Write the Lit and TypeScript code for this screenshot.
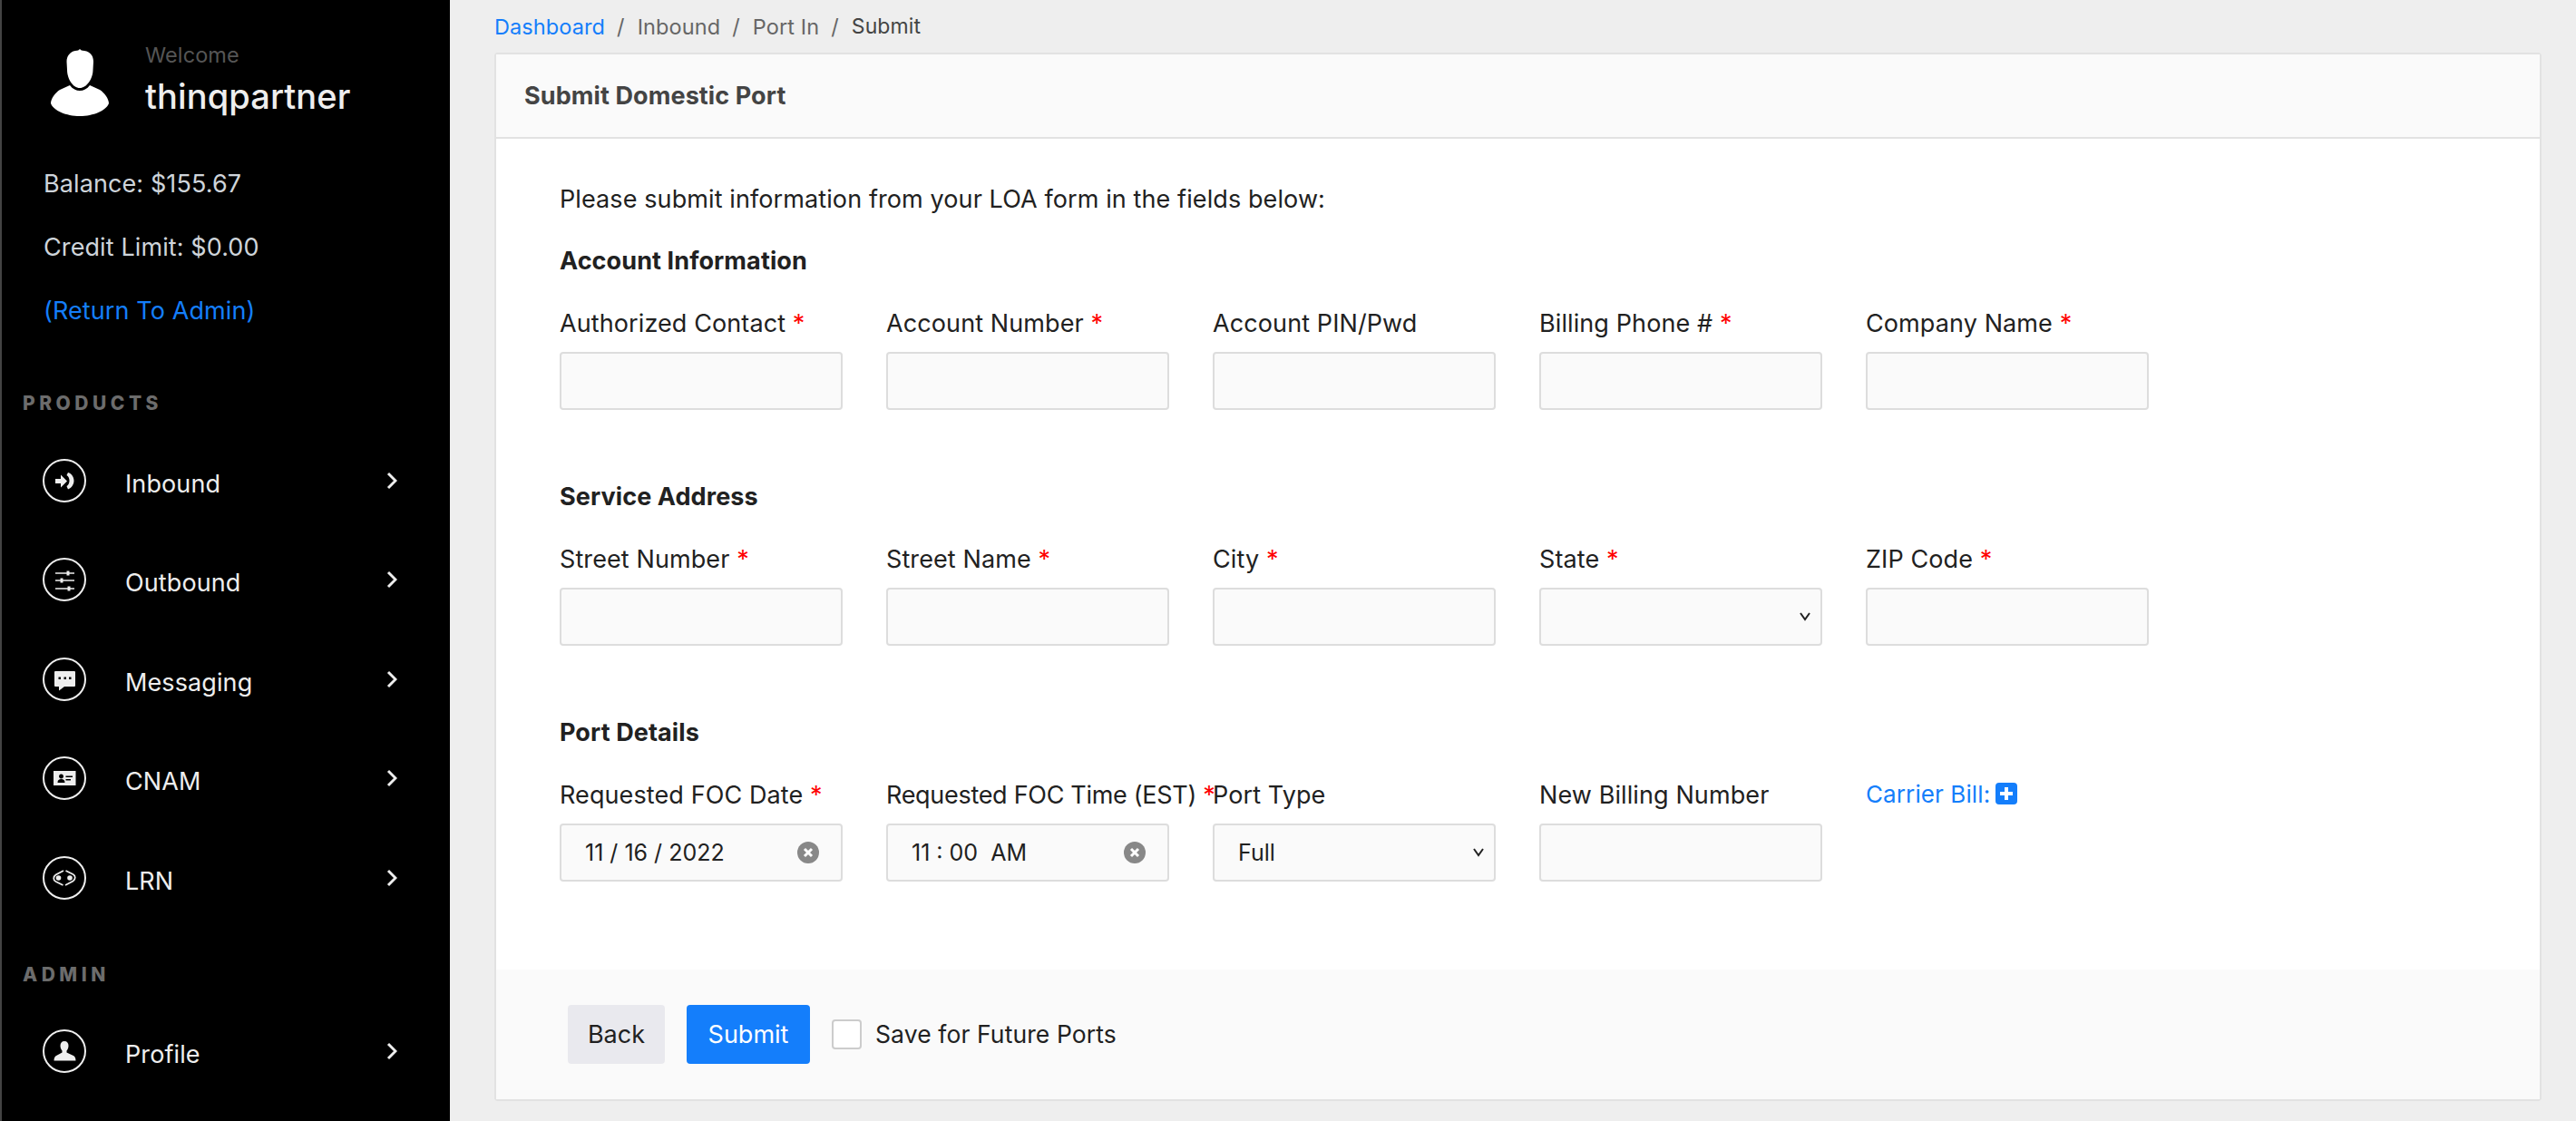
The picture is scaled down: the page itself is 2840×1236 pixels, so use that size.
import {LitElement, html, css, svg} from 'lit';
import {customElement} from 'lit/decorators.js';
import {classMap} from 'lit/directives/class-map.js';

type Field = {
  label: string;
  required?: boolean;
  tight?: boolean;
  kind?: 'input' | 'select' | 'clear' | 'link';
  value?: string;
};

const sections: {title: string; fields: Field[]}[] = [
  {
    title: 'Account Information',
    fields: [
      {label: 'Authorized Contact', required: true},
      {label: 'Account Number', required: true},
      {label: 'Account PIN/Pwd'},
      {label: 'Billing Phone #', required: true},
      {label: 'Company Name', required: true},
    ],
  },
  {
    title: 'Service Address',
    fields: [
      {label: 'Street Number', required: true},
      {label: 'Street Name', required: true},
      {label: 'City', required: true},
      {label: 'State', required: true, kind: 'select'},
      {label: 'ZIP Code', required: true},
    ],
  },
  {
    title: 'Port Details',
    fields: [
      {label: 'Requested FOC Date', required: true, kind: 'clear', value: '11 / 16 / 2022'},
      {label: 'Requested FOC Time (EST)', required: true, tight: true, kind: 'clear', value: '11 : 00\u00a0 AM'},
      {label: 'Port Type', kind: 'select', value: 'Full'},
      {label: 'New Billing Number'},
      {label: 'Carrier Bill:', kind: 'link'},
    ],
  },
];

// nav icons, drawn in the 48x48 box of the ring
const icons = {
  inbound: svg`<path d="M14 22h6v-4.500l7 7-7 7V27h-6z"/><path d="M28 15c4 1 6.500 5 6.500 9s-2.500 8-6.500 9.500l-1.500-3.500c2-1 3-3.500 3-6s-1-5-3-6z"/>`,
  outbound: svg`<path d="M14 16.200h21v1.600H14zM14 24.200h21v1.600H14zM14 33.200h21v1.600H14z"/><path d="M26.500 14.500h3v5h-3zM19.500 22.500h3v5h-3zM27.500 31.500h3v5h-3z"/>`,
  messaging: svg`<path fill-rule="evenodd" d="M14 15h21a1 1 0 0 1 1 1v15a1 1 0 0 1-1 1H24l-6 4.500V32h-4a1 1 0 0 1-1-1V16a1 1 0 0 1 1-1zM17.500 21.500v2.500H20v-2.500zM23.500 21.500v2.500H26v-2.500zM29 21.500v2.500h2.500v-2.500z"/>`,
  cnam: svg`<path fill-rule="evenodd" d="M12 16h24.500v16H12zM20.500 19.500a2.500 2.500 0 1 0 .01 0zM16.500 29c0-3 1.500-4 4-4s4 1 4 4zM25.500 21.500h7.500v1.500h-7.500zM25.500 25h5.500v1.500h-5.500z"/>`,
  lrn: svg`<g fill="none" stroke="#eee" stroke-width="1.800"><path d="M23 16l-8.500 4.500c-3 2-3 6 0 7.500l8 4"/><path d="M25 32l8.500-4.500c3-2 3-6 0-7.500l-8-4"/></g><circle cx="17.500" cy="24" r="2.800"/><circle cx="30" cy="24" r="2.800"/>`,
  profile: svg`<path d="M24 13c3 0 4.500 2 4.500 5 0 2.500-1 4.500-2 5.500v2l7.500 3.500c1.500.7 2.500 2.500 2.500 5.500H12.500c0-3 1-4.800 2.500-5.500l6.500-3.500v-2c-1-1-2-3-2-5.500 0-3 1.500-5 4.500-5z"/>`,
};

const navSections: {title: string; items: {label: string; icon: keyof typeof icons}[]}[] = [
  {
    title: 'PRODUCTS',
    items: [
      {label: 'Inbound', icon: 'inbound'},
      {label: 'Outbound', icon: 'outbound'},
      {label: 'Messaging', icon: 'messaging'},
      {label: 'CNAM', icon: 'cnam'},
      {label: 'LRN', icon: 'lrn'},
    ],
  },
  {title: 'ADMIN', items: [{label: 'Profile', icon: 'profile'}]},
];

@customElement('app-root')
export class AppRoot extends LitElement {
  static override styles = css`
    * {
      box-sizing: border-box;
      margin: 0;
      padding: 0;
    }

    :host {
      display: flex;
      height: 100vh;
      overflow: hidden;
      background: #eeeeee;
      color: #212121;
      font-family: Inter, "Liberation Sans", sans-serif;
      font-size: 27px;
      letter-spacing: 0.1px;
    }

    .sidebar {
      width: 496px;
      flex: none;
      background: #000;
      border-left: 2px solid #444;
      overflow: hidden;
    }

    .user {
      display: flex;
      align-items: flex-start;
      gap: 40px;
      padding: 48px 0 0 54px;
      height: 168px;
    }

    .avatar {
      margin-top: 6px;
      flex: none;
    }

    .welcome {
      color: #555;
      font-size: 23.500px;
      line-height: 26px;
    }

    .username {
      color: #eee;
      font-size: 38px;
      font-weight: 500;
      line-height: 46px;
      margin-top: 9px;
    }

    .stats {
      padding-left: 46px;
      height: 263px;
      color: #ced4da;
    }

    .stats div {
      height: 70px;
      line-height: 70px;
    }

    .stats .admin {
      color: #147efb;
    }

    .nav-title {
      color: #6c6c6c;
      font-size: 21px;
      font-weight: 800;
      letter-spacing: 4.500px;
      line-height: 28px;
      padding-left: 23px;
    }

    .nav-items {
      margin: 16px 0 38px;
    }

    .nav-item {
      height: 109.500px;
      display: flex;
      align-items: center;
      padding-left: 45px;
      color: #eee;
    }

    .ring {
      flex: none;
      fill: #eee;
    }

    .nav-item span {
      flex: 1;
      margin-left: 43px;
      padding-top: 7px;
    }

    .chevron {
      flex: none;
      margin-right: 58px;
    }

    .main {
      flex: 1;
      min-width: 0;
      display: flex;
      flex-direction: column;
      padding: 0 38px 22px 49px;
    }

    .crumbs {
      height: 58px;
      flex: none;
      display: flex;
      align-items: center;
      font-size: 23.500px;
      color: #666;
    }

    .crumbs a {
      color: #147efb;
    }

    .crumbs i {
      font-style: normal;
      margin: 0 14px 0 13px;
    }

    .crumbs .here {
      color: #444;
      font-size: 23px;
    }

    .card {
      flex: 1;
      display: flex;
      flex-direction: column;
      background: #fff;
      border: 2px solid #e2e2e2;
      border-radius: 4px;
    }

    .card-head {
      height: 93px;
      flex: none;
      display: flex;
      align-items: center;
      padding-left: 31px;
      background: #fafafa;
      border-bottom: 2px solid #e2e2e2;
      color: #444;
      font-weight: 700;
    }

    .card-body {
      flex: 1;
      padding: 50px 0 0 70px;
    }

    .intro {
      line-height: 34px;
      margin-bottom: 32px;
    }

    .section {
      margin-bottom: 77px;
    }

    .section h3 {
      font-size: 27px;
      font-weight: 700;
      height: 34px;
      line-height: 37px;
      margin-bottom: 35px;
    }

    .fields {
      display: grid;
      grid-template-columns: repeat(5, 312px);
      column-gap: 48px;
    }

    .field label {
      display: block;
      height: 34px;
      line-height: 37px;
      margin-bottom: 16px;
      white-space: nowrap;
    }

    .field label.tight {
      letter-spacing: -0.3px;
    }

    .star {
      color: #f00;
    }

    .carrier {
      color: #147efb;
      display: flex;
      align-items: center;
      gap: 6px;
      font-size: 26px;
      white-space: nowrap;
      height: 34px;
    }

    .box {
      position: relative;
      height: 64px;
      display: flex;
      align-items: center;
      justify-content: space-between;
      padding: 0 26px;
      background: #fafafa;
      border: 2px solid #ddd;
      border-radius: 4px;
      font-size: 25px;
      letter-spacing: 0;
      white-space: nowrap;
    }

    .box input {
      position: absolute;
      inset: 0;
      border: none;
      outline: none;
      background: transparent;
    }

    .box .caret {
      position: absolute;
      right: 9px;
      top: 24px;
    }

    .clear {
      flex: none;
      margin-right: -2px;
    }

    .card-foot {
      height: 143px;
      flex: none;
      display: flex;
      align-items: center;
      padding-left: 79px;
      background: #fafafa;
    }

    button {
      font: inherit;
      height: 65px;
      border: none;
      border-radius: 4px;
    }

    .back {
      width: 107px;
      background: #e9e9ee;
      color: #212121;
      margin-right: 24px;
    }

    .submit {
      width: 136px;
      background: #147efb;
      color: #fff;
      margin-right: 24px;
    }

    .check {
      width: 33px;
      height: 33px;
      background: #fff;
      border: 2px solid #ccc;
      border-radius: 4px;
      margin-right: 15px;
    }

    .save {
      font-size: 26.500px;
      padding-bottom: 2px;
    }
  `;

  renderField(f: Field) {
    if (f.kind === 'link') {
      return html`<div class="field">
        <div class="carrier">
          ${f.label}
          <svg width="24" height="24" viewBox="0 0 24 24">
            <rect width="24" height="24" rx="4" fill="#147efb" />
            <path d="M10 5h4v5h5v4h-5v5h-4v-5H5v-4h5z" fill="#fff" />
          </svg>
        </div>
      </div>`;
    }
    return html`<div class="field">
      <label class=${classMap({tight: !!f.tight})}>${f.label}${f.required ? html` <span class="star">*</span>` : ''}</label>
      ${this.renderControl(f)}
    </div>`;
  }

  renderControl(f: Field) {
    if (f.kind === 'select') {
      return html`<div class="box">
        ${f.value ?? ''}
        <svg class="caret" width="16" height="12" viewBox="0 0 16 12" fill="none" stroke="#222" stroke-width="2">
          <path d="M3 2l5 7 5-7" />
        </svg>
      </div>`;
    }
    if (f.kind === 'clear') {
      return html`<div class="box">
        <span>${f.value}</span>
        <svg class="clear" width="24" height="24" viewBox="0 0 24 24">
          <circle cx="12" cy="12" r="12" fill="#888" />
          <path d="M8 8l8 8M16 8l-8 8" stroke="#fff" stroke-width="3" />
        </svg>
      </div>`;
    }
    return html`<div class="box"><input type="text" /></div>`;
  }

  override render() {
    return html`
      <aside class="sidebar">
        <div class="user">
          <svg class="avatar" width="64" height="74" viewBox="0 0 64 74" fill="#fff">
            <path d="M32 0c1 1 2 2 5 2 7 1 10 6 10 12l-.5 9c0 10-7 20-14.500 20S18 33 18 23l-.5-9C17.500 8 21 3 27 2c3 0 4-1 5-2z" />
            <path d="M21 40c3 4 7 6 11 6s8-2 11-6l11 5c5 3 10 10 10 15-3 8-17 14-32 14S3 68 0 60c0-5 5-12 10-15z" />
          </svg>
          <div>
            <div class="welcome">Welcome</div>
            <div class="username">thinqpartner</div>
          </div>
        </div>
        <div class="stats">
          <div>Balance: $155.67</div>
          <div>Credit Limit: $0.00</div>
          <div class="admin">(Return To Admin)</div>
        </div>
        ${navSections.map(
          (s) => html`
            <div class="nav-title">${s.title}</div>
            <div class="nav-items">
              ${s.items.map(
                (item) => html`<div class="nav-item">
                  <svg class="ring" width="48" height="48" viewBox="0 0 48 48">
                    <circle cx="24" cy="24" r="23" fill="none" stroke="#eee" stroke-width="2" />
                    ${icons[item.icon]}
                  </svg>
                  <span>${item.label}</span>
                  <svg class="chevron" width="12" height="20" viewBox="0 0 12 20" fill="none" stroke="#eee" stroke-width="3">
                    <path d="M2 2l8 8-8 8" />
                  </svg>
                </div>`
              )}
            </div>
          `
        )}
      </aside>
      <main class="main">
        <nav class="crumbs">
          <a>Dashboard</a><i>/</i>Inbound<i>/</i>Port In<i>/</i><span class="here">Submit</span>
        </nav>
        <section class="card">
          <div class="card-head">Submit Domestic Port</div>
          <div class="card-body">
            <p class="intro">Please submit information from your LOA form in the fields below:</p>
            ${sections.map(
              (s) => html`<div class="section">
                <h3>${s.title}</h3>
                <div class="fields">${s.fields.map((f) => this.renderField(f))}</div>
              </div>`
            )}
          </div>
          <div class="card-foot">
            <button class="back">Back</button>
            <button class="submit">Submit</button>
            <span class="check"></span>
            <span class="save">Save for Future Ports</span>
          </div>
        </section>
      </main>
    `;
  }
}

declare global {
  interface HTMLElementTagNameMap {
    'app-root': AppRoot;
  }
}
